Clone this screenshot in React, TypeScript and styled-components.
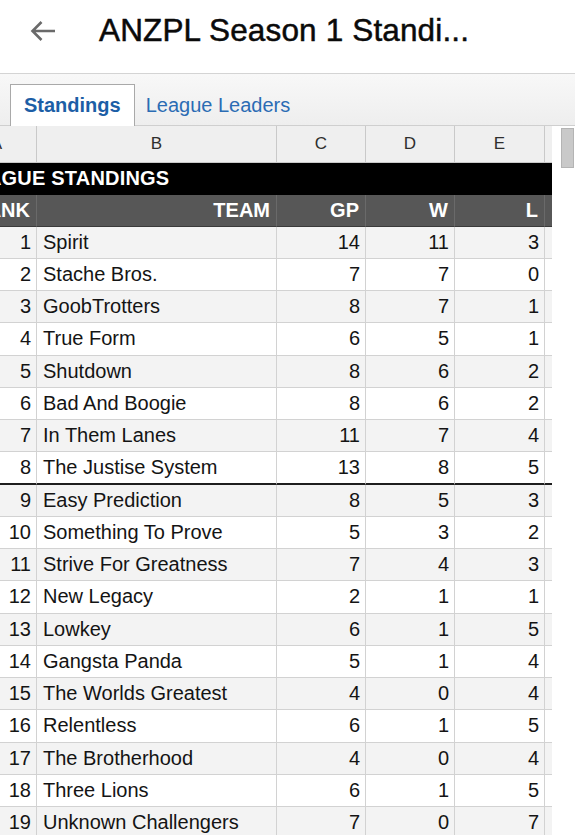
import React from "react";
import styled, { createGlobalStyle } from "styled-components";

const Global = createGlobalStyle`
  html, body { margin: 0; padding: 0; background: #fff; }
  body { font-family: "Liberation Sans", Arial, sans-serif; width: 575px; height: 835px; overflow: hidden; }
`;

const AppBar = styled.header`
  height: 74px;
  box-sizing: border-box;
  display: flex;
  align-items: center;
  padding: 0 0 12px 30px;
  background: #fff;
  border-bottom: 1px solid #d4d4d4;
`;

const Title = styled.h1`
  margin: 0 0 0 43px;
  font-size: 31.5px;
  font-weight: 400;
  color: #0a0a0a;
  white-space: nowrap;
  letter-spacing: 0.15px;
  -webkit-text-stroke: 0.5px #0a0a0a;
`;

const TabBar = styled.nav`
  height: 52px;
  box-sizing: border-box;
  display: flex;
  align-items: flex-end;
  padding-left: 10px;
  background: linear-gradient(#f8f8f8, #eeeeee);
  border-bottom: 1px solid #cfcfcf;
`;

const Tab = styled.div<{ $active?: boolean }>`
  height: ${(p) => (p.$active ? "42px" : "40px")};
  box-sizing: border-box;
  display: flex;
  align-items: center;
  padding: 0 ${(p) => (p.$active ? "13px" : "11px")};
  font-size: 20px;
  font-weight: ${(p) => (p.$active ? 700 : 400)};
  color: ${(p) => (p.$active ? "#1c5ea6" : "#2b6cb4")};
  background: ${(p) => (p.$active ? "#fff" : "transparent")};
  border: ${(p) => (p.$active ? "1px solid #a9a9a9" : "none")};
  border-bottom: none;
  margin-bottom: ${(p) => (p.$active ? "-1px" : "0")};
  position: relative;
`;

const SheetArea = styled.div`
  position: relative;
  overflow: hidden;
  height: 709px;
`;

const Grid = styled.div`
  display: grid;
  grid-template-columns: 80px 240px 89px 89px 90px 7px;
  margin-left: -43px;
  width: 595px;
`;

const ColHead = styled.div<{ $last?: boolean }>`
  height: 36.5px;
  box-sizing: border-box;
  display: flex;
  align-items: center;
  justify-content: center;
  background: #efefef;
  color: #2e2e2e;
  font-size: 17px;
  border-right: ${(p) => (p.$last ? "none" : "1px solid #c9c9c9")};
  border-bottom: 1px solid #c9c9c9;
`;

const TitleRow = styled.div`
  grid-column: 1 / -1;
  height: 32px;
  box-sizing: border-box;
  display: flex;
  align-items: center;
  padding-left: 4px;
  background: #000;
  color: #fff;
  font-size: 20px;
  font-weight: 700;
  letter-spacing: 0.2px;
`;

const HeadCell = styled.div<{ $last?: boolean }>`
  height: 32px;
  box-sizing: border-box;
  display: flex;
  align-items: center;
  justify-content: flex-end;
  padding-right: 6px;
  background: #575757;
  color: #fff;
  font-size: 20px;
  font-weight: 700;
  border-right: ${(p) => (p.$last ? "none" : "1px solid #6a6a6a")};
  border-bottom: 1px solid #3a3a3a;
`;

const Cell = styled.div<{ $odd: boolean; $align: "left" | "right"; $thick?: boolean; $last?: boolean }>`
  height: 32.25px;
  box-sizing: border-box;
  display: flex;
  align-items: center;
  justify-content: ${(p) => (p.$align === "left" ? "flex-start" : "flex-end")};
  padding: ${(p) => (p.$align === "left" ? "0 0 0 6px" : "0 5px 0 0")};
  background: ${(p) => (p.$odd ? "#f3f3f3" : "#fff")};
  color: #141414;
  font-size: 20px;
  white-space: nowrap;
  overflow: hidden;
  border-right: ${(p) => (p.$last ? "none" : "1px solid #d2d2d2")};
  border-bottom: ${(p) => (p.$thick ? "2px solid #1e1e1e" : "1px solid #d2d2d2")};
`;

const Thumb = styled.div`
  position: absolute;
  top: 2px;
  right: 1px;
  width: 13px;
  height: 40px;
  box-sizing: border-box;
  background: #c9c9c9;
  border: 1px solid #b4b4b4;
`;

const BackIcon = () => (
  <svg width="26" height="22" viewBox="0 0 26 22" fill="none">
    <path d="M25 11H2.5M11.5 2L2.5 11L11.5 20" stroke="#6a6a6a" strokeWidth="2.6" />
  </svg>
);

const rows: [number, string, number, number, number][] = [
  [1, "Spirit", 14, 11, 3],
  [2, "Stache Bros.", 7, 7, 0],
  [3, "GoobTrotters", 8, 7, 1],
  [4, "True Form", 6, 5, 1],
  [5, "Shutdown", 8, 6, 2],
  [6, "Bad And Boogie", 8, 6, 2],
  [7, "In Them Lanes", 11, 7, 4],
  [8, "The Justise System", 13, 8, 5],
  [9, "Easy Prediction", 8, 5, 3],
  [10, "Something To Prove", 5, 3, 2],
  [11, "Strive For Greatness", 7, 4, 3],
  [12, "New Legacy", 2, 1, 1],
  [13, "Lowkey", 6, 1, 5],
  [14, "Gangsta Panda", 5, 1, 4],
  [15, "The Worlds Greatest", 4, 0, 4],
  [16, "Relentless", 6, 1, 5],
  [17, "The Brotherhood", 4, 0, 4],
  [18, "Three Lions", 6, 1, 5],
  [19, "Unknown Challengers", 7, 0, 7],
];

export default function App() {
  return (
    <>
      <Global />
      <AppBar>
        <BackIcon />
        <Title>ANZPL Season 1 Standi...</Title>
      </AppBar>
      <TabBar>
        <Tab $active>Standings</Tab>
        <Tab>League Leaders</Tab>
      </TabBar>
      <SheetArea>
        <Grid>
          {["A", "B", "C", "D", "E", ""].map((c, i) => (
            <ColHead key={i} $last={i === 5}>{c}</ColHead>
          ))}
          <TitleRow>LEAGUE STANDINGS</TitleRow>
          {["RANK", "TEAM", "GP", "W", "L", ""].map((c, i) => (
            <HeadCell key={i} $last={i === 5}>{c}</HeadCell>
          ))}
          {rows.map((r) => {
            const odd = r[0] % 2 === 1;
            const thick = r[0] === 8;
            return (
              <React.Fragment key={r[0]}>
                <Cell $odd={odd} $thick={thick} $align="right">{r[0]}</Cell>
                <Cell $odd={odd} $thick={thick} $align="left">{r[1]}</Cell>
                <Cell $odd={odd} $thick={thick} $align="right">{r[2]}</Cell>
                <Cell $odd={odd} $thick={thick} $align="right">{r[3]}</Cell>
                <Cell $odd={odd} $thick={thick} $align="right">{r[4]}</Cell>
                <Cell $odd={odd} $thick={thick} $align="right" $last />
              </React.Fragment>
            );
          })}
        </Grid>
        <Thumb />
      </SheetArea>
    </>
  );
}
